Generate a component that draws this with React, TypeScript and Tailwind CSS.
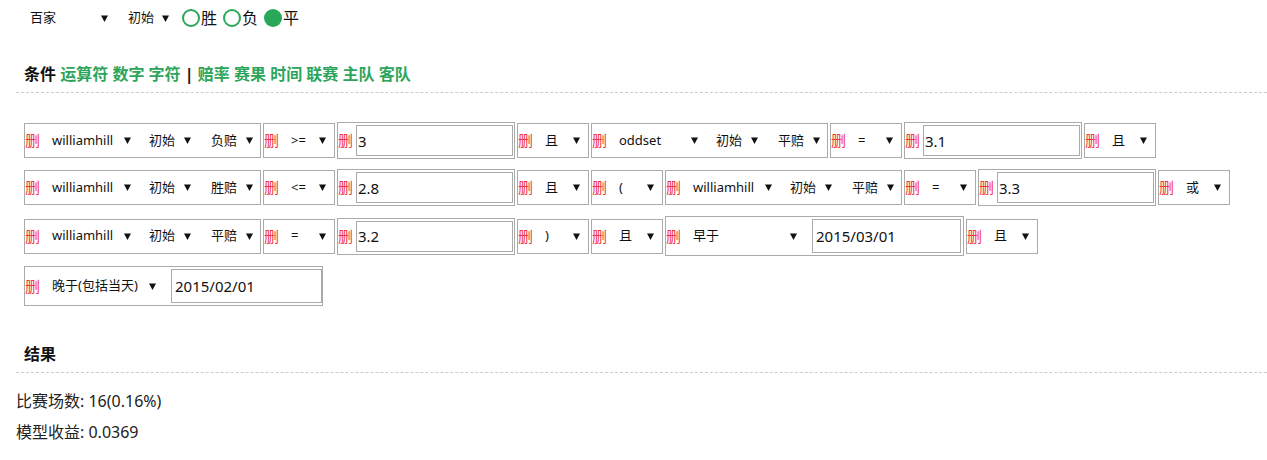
const GREEN_LINKS_A = ["运算符", "数字", "字符"];
const GREEN_LINKS_B = ["赔率", "赛果", "时间", "联赛", "主队", "客队"];

function Arrow() {
  return (
    <svg width="7" height="7" viewBox="0 0 7 7" className="shrink-0">
      <path d="M0 0.5h7L3.5 7z" fill="#111" />
    </svg>
  );
}

function Sel({ label, className }: { label: string; className: string }) {
  return (
    <div className={`flex items-center justify-between pl-2 shrink-0 ${className}`}>
      <span className="whitespace-nowrap">{label}</span>
      <Arrow />
    </div>
  );
}

function Del() {
  return <span className="w-[15px] shrink-0 text-[15px] leading-none text-[#f2353f]">删</span>;
}

function SiteBox({ site, kind }: { site: string; kind: string }) {
  return (
    <div className="flex h-[35px] w-[237px] items-center border border-[#aaa]">
      <Del />
      <Sel label={site} className="ml-[4px] w-[94px] pr-[7px]" />
      <Sel label="初始" className="ml-[3px] w-[56px] pr-[6px]" />
      <Sel label={kind} className="ml-[6px] w-[57px] pr-[7px]" />
    </div>
  );
}

function OpBox({ op }: { op: string }) {
  return (
    <div className="flex h-[35px] w-[72px] items-center border border-[#aaa]">
      <Del />
      <Sel label={op} className="ml-[4px] w-[51px] pr-[8px]" />
    </div>
  );
}

function ValBox({ v }: { v: string }) {
  return (
    <div className="flex h-[37px] w-[178px] items-center border border-[#aaa]">
      <Del />
      <input
        readOnly
        value={v}
        className="ml-[3px] h-[31px] w-[157px] border border-[#aaa] pl-[1px] text-[15px] text-[#111] outline-none"
      />
    </div>
  );
}

function DateBox({ label, date, inputW }: { label: string; date: string; inputW: string }) {
  return (
    <div className="flex h-[40px] w-[299px] items-center border border-[#aaa]">
      <Del />
      <Sel label={label} className="ml-[4px] w-[118px] pr-[6px]" />
      <input
        readOnly
        value={date}
        className={`ml-[9px] h-[34px] border border-[#aaa] pl-[3px] text-[15px] text-[#111] outline-none ${inputW}`}
      />
    </div>
  );
}

export default function App() {
  return (
    <div className="min-h-[460px] bg-white pl-4 text-[13px] text-[#111] font-['Noto_Sans','Noto_Sans_CJK_SC',sans-serif]">
      {/* top filters */}
      <div className="flex h-[36px] items-center">
        <Sel label="百家" className="ml-[6px] w-[93px] pr-[7px]" />
        <Sel label="初始" className="ml-[5px] w-[56px] pr-[7px]" />
        <span className="ml-[6px] h-[18px] w-[18px] rounded-full border-2 border-[#2aa85a]" />
        <span className="ml-[1px] text-[16px]">胜</span>
        <span className="ml-[6px] h-[18px] w-[18px] rounded-full border-2 border-[#2aa85a]" />
        <span className="ml-[1px] text-[16px]">负</span>
        <span className="ml-[6px] h-[18px] w-[18px] rounded-full bg-[#2aa85a]" />
        <span className="ml-[1px] text-[16px]">平</span>
      </div>

      {/* conditions header */}
      <div className="mt-[26px] border-b border-dashed border-[#ccc] pb-[6px] pl-2 text-[16px] font-bold leading-[24px]">
        <span>条件</span>{" "}
        {GREEN_LINKS_A.map((l) => (
          <span key={l} className="text-[#2ca55a]">
            {l}{" "}
          </span>
        ))}
        <span>|</span>{" "}
        {GREEN_LINKS_B.map((l) => (
          <span key={l} className="text-[#2ca55a]">
            {l}{" "}
          </span>
        ))}
      </div>

      {/* condition list */}
      <div className="mt-[29px] flex flex-wrap items-center gap-x-[2px] gap-y-[10px] pl-2">
        <SiteBox site="williamhill" kind="负赔" />
        <OpBox op=">=" />
        <ValBox v="3" />
        <OpBox op="且" />
        <SiteBox site="oddset" kind="平赔" />
        <OpBox op="=" />
        <ValBox v="3.1" />
        <OpBox op="且" />

        <SiteBox site="williamhill" kind="胜赔" />
        <OpBox op="<=" />
        <ValBox v="2.8" />
        <OpBox op="且" />
        <OpBox op="(" />
        <SiteBox site="williamhill" kind="平赔" />
        <OpBox op="=" />
        <ValBox v="3.3" />
        <OpBox op="或" />

        <SiteBox site="williamhill" kind="平赔" />
        <OpBox op="=" />
        <ValBox v="3.2" />
        <OpBox op=")" />
        <OpBox op="且" />
        <DateBox label="早于" date="2015/03/01" inputW="w-[149px]" />
        <OpBox op="且" />

        <DateBox label="晚于(包括当天)" date="2015/02/01" inputW="w-[151px]" />
      </div>

      {/* results */}
      <div className="mt-[36px] border-b border-dashed border-[#ccc] pb-[6px] pl-2 text-[16px] font-bold leading-[24px]">
        结果
      </div>
      <div className="mt-[13px] text-[16px] leading-[31px] text-[#222]">
        <div>比赛场数: 16(0.16%)</div>
        <div>模型收益: 0.0369</div>
      </div>
    </div>
  );
}
